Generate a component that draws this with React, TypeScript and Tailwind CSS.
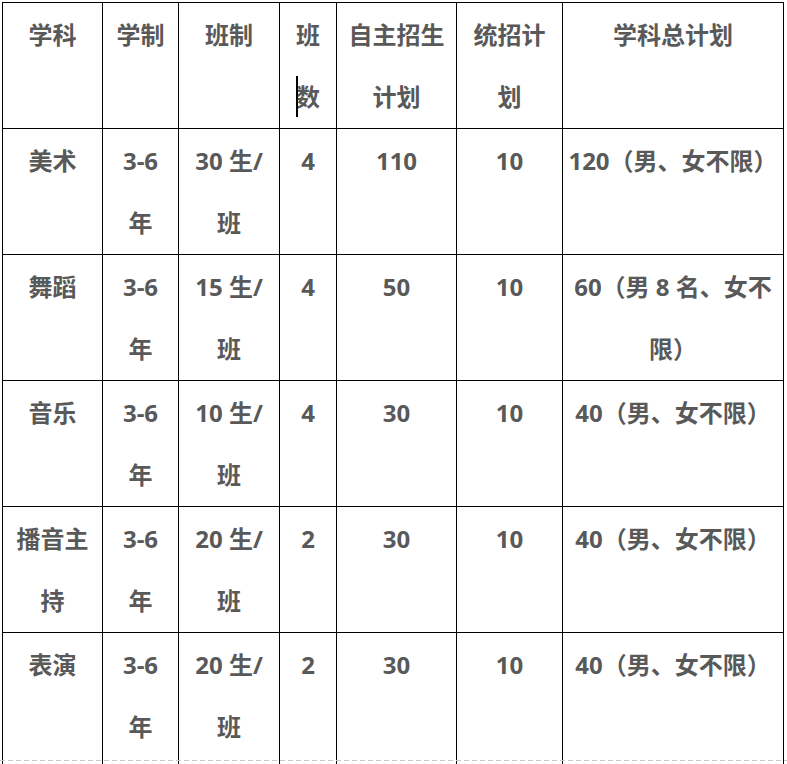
const header: string[][] = [
  ["学科"],
  ["学制"],
  ["班制"],
  ["班", "数"],
  ["自主招生", "计划"],
  ["统招计", "划"],
  ["学科总计划"],
];

const rows: string[][][] = [
  [["美术"], ["3-6", "年"], ["30 生/", "班"], ["4"], ["110"], ["10"], ["120（男、女不限）"]],
  [["舞蹈"], ["3-6", "年"], ["15 生/", "班"], ["4"], ["50"], ["10"], ["60（男 8 名、女不", "限）"]],
  [["音乐"], ["3-6", "年"], ["10 生/", "班"], ["4"], ["30"], ["10"], ["40（男、女不限）"]],
  [["播音主", "持"], ["3-6", "年"], ["20 生/", "班"], ["2"], ["30"], ["10"], ["40（男、女不限）"]],
  [["表演"], ["3-6", "年"], ["20 生/", "班"], ["2"], ["30"], ["10"], ["40（男、女不限）"]],
];

const widths = ["w-[100px]", "w-[76px]", "w-[101px]", "w-[57px]", "w-[120px]", "w-[106px]", "w-[221px]"];

function Cell({ lines, tall }: { lines: string[]; tall?: boolean }) {
  return (
    <td className="border border-black p-0 align-top">
      <div className={`${tall ? "h-[140px]" : "h-[125px]"} pt-[1px] text-center leading-[62px] whitespace-nowrap`}>
        {lines.map((l, i) => (
          <div key={i}>{l}</div>
        ))}
      </div>
    </td>
  );
}

export default function App() {
  return (
    <div
      className="relative h-[764px] w-[787px] overflow-hidden bg-white pl-[2px] pt-[2px] text-[24px] font-bold text-[#595959]"
      style={{ fontFamily: '"Open Sans", "Noto Sans CJK SC", sans-serif' }}
    >
      <table className="w-[781px] table-fixed border-collapse">
        <colgroup>
          {widths.map((w, i) => (
            <col key={i} className={w} />
          ))}
        </colgroup>
        <thead>
          <tr>
            {header.map((h, i) => (
              <Cell key={i} lines={h} />
            ))}
          </tr>
        </thead>
        <tbody>
          {rows.map((r, ri) => (
            <tr key={ri}>
              {r.map((c, ci) => (
                <Cell key={ci} lines={c} tall={ri === rows.length - 1} />
              ))}
            </tr>
          ))}
        </tbody>
      </table>

      {/* text caret in the 班数 cell */}
      <span className="absolute left-[296px] top-[76px] h-[41px] w-[2px] bg-black" />

      {/* page break line */}
      <div className="absolute left-0 right-0 top-[760px] h-px bg-[repeating-linear-gradient(90deg,#c8c8c8_0_5px,transparent_5px_8px)]" />
    </div>
  );
}
